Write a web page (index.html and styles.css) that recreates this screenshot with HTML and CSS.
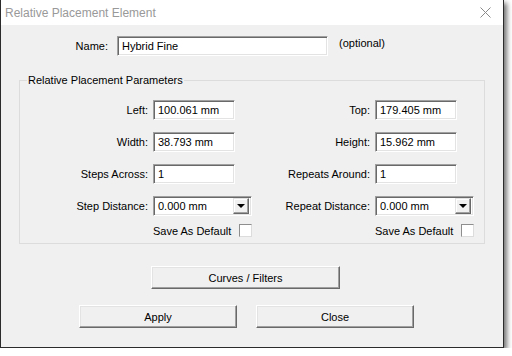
FILE: index.html
```html
<!DOCTYPE html>
<html lang="en">
<head>
    <meta charset="UTF-8">
    <title>Relative Placement Element</title>
    <link rel="stylesheet" href="styles.css">
</head>
<body>
    <div class="window">
        <!-- Title bar -->
        <div class="titlebar">
            <span class="title">Relative Placement Element</span>
            <svg class="close-x" width="11" height="11" viewBox="0 0 11 11">
                <path d="M0.5 0.5L10.5 10.5M10.5 0.5L0.5 10.5" stroke="#8a8a8a" stroke-width="1"/>
            </svg>
        </div>

        <div class="client">
            <div class="name-row">
                <span class="name-label">Name:</span>
                <div class="field name-field">Hybrid Fine</div>
                <span class="hint">(optional)</span>
            </div>

            <fieldset class="group">
                <legend>Relative Placement Parameters</legend>
                <div class="param-grid">
                    <span class="label">Left:</span>
                    <div class="field">100.061 mm</div>
                    <span class="label">Top:</span>
                    <div class="field">179.405 mm</div>

                    <span class="label">Width:</span>
                    <div class="field">38.793 mm</div>
                    <span class="label">Height:</span>
                    <div class="field">15.962 mm</div>

                    <span class="label">Steps Across:</span>
                    <div class="field">1</div>
                    <span class="label">Repeats Around:</span>
                    <div class="field">1</div>

                    <span class="label">Step Distance:</span>
                    <div class="combo">
                        <span class="combo-text">0.000 mm</span>
                        <span class="combo-btn"><span class="arrow"></span></span>
                    </div>
                    <span class="label">Repeat Distance:</span>
                    <div class="combo">
                        <span class="combo-text">0.000 mm</span>
                        <span class="combo-btn"><span class="arrow"></span></span>
                    </div>

                    <span></span>
                    <label class="check-row">Save As Default <span class="checkbox"></span></label>
                    <span></span>
                    <label class="check-row">Save As Default <span class="checkbox"></span></label>
                </div>
            </fieldset>

            <div class="curves-row">
                <button class="btn curves-btn">Curves / Filters</button>
            </div>

            <div class="action-row">
                <button class="btn action-btn">Apply</button>
                <button class="btn action-btn">Close</button>
            </div>
        </div>
    </div>
</body>
</html>
```

FILE: styles.css
```css
* {
    margin: 0;
    padding: 0;
    box-sizing: border-box;
}

body {
    background: #ffffff;
    font-family: 'Liberation Sans', Arial, sans-serif;
    font-size: 11px;
    color: #000;
}

.window {
    width: 504px;
    height: 348px;
    background: #f0f0f0;
    border: 1px solid #2b2b2b;
    border-top: none;
    box-shadow: 3px 3px 5px rgba(0, 0, 0, 0.55);
}

/* Title bar */
.titlebar {
    height: 25px;
    background: #ffffff;
    display: flex;
    align-items: center;
    justify-content: space-between;
    padding: 0 12px 0 4px;
}

.title {
    font-size: 12px;
    color: #999999;
}

/* Client area */
.client {
    padding-top: 11px;
}

.field {
    height: 20px;
    width: 82px;
    background: #fff;
    border: 1px solid;
    border-color: #a0a0a0 #ffffff #ffffff #a0a0a0;
    box-shadow: inset 1px 1px #696969, inset -1px -1px #e3e3e3;
    padding: 3px 0 0 4px;
    white-space: nowrap;
}

.name-row {
    display: flex;
    align-items: center;
}

.name-label {
    width: 107px;
    text-align: right;
    margin-right: 9px;
}

.name-field {
    width: 211px;
}

.hint {
    margin-left: 11px;
    margin-top: -6px;
}

/* Group box */
.group {
    margin: 18px 0 0 18px;
    width: 466px;
    border: 1px solid #dcdcdc;
    padding: 13px 0 6px 0;
}

.group legend {
    margin-left: 7px;
    padding: 0 1px;
    line-height: 13px;
}

.param-grid {
    display: grid;
    grid-template-columns: 128px 99px 113px 99px;
    column-gap: 5px;
    row-gap: 12px;
    align-items: center;
}

.label {
    text-align: right;
    white-space: nowrap;
}

.combo {
    height: 20px;
    background: #fff;
    border: 1px solid;
    border-color: #a0a0a0 #ffffff #ffffff #a0a0a0;
    box-shadow: inset 1px 1px #696969, inset -1px -1px #e3e3e3;
    display: flex;
    align-items: center;
    justify-content: space-between;
    padding: 1px 2px 1px 4px;
}

.combo-btn {
    width: 16px;
    height: 16px;
    background: #f0f0f0;
    border: 1px solid;
    border-color: #e3e3e3 #696969 #696969 #e3e3e3;
    box-shadow: inset -1px -1px #a0a0a0, inset 1px 1px #fff;
    display: flex;
    align-items: center;
    justify-content: center;
}

.arrow {
    width: 0;
    height: 0;
    border-left: 4px solid transparent;
    border-right: 4px solid transparent;
    border-top: 4px solid #000;
}

.check-row {
    display: flex;
    justify-content: flex-end;
    align-items: center;
    gap: 8px;
    margin-top: -4px;
    white-space: nowrap;
}

.checkbox {
    width: 13px;
    height: 13px;
    background: #fff;
    border: 1px solid;
    border-color: #8e8e8e #dcdcdc #dcdcdc #8e8e8e;
}

/* Buttons */
.btn {
    font-family: 'Liberation Sans', Arial, sans-serif;
    font-size: 11px;
    color: #000;
    background: #f0f0f0;
    border: 1px solid;
    border-color: #fff #696969 #696969 #fff;
    box-shadow: inset -1px -1px #a0a0a0, inset 1px 1px #e3e3e3;
    height: 23px;
}

.curves-row {
    margin: 22px 0 0 150px;
}

.curves-btn {
    width: 189px;
}

.action-row {
    display: flex;
    gap: 19px;
    margin: 16px 0 0 78px;
}

.action-btn {
    width: 158px;
}
```
